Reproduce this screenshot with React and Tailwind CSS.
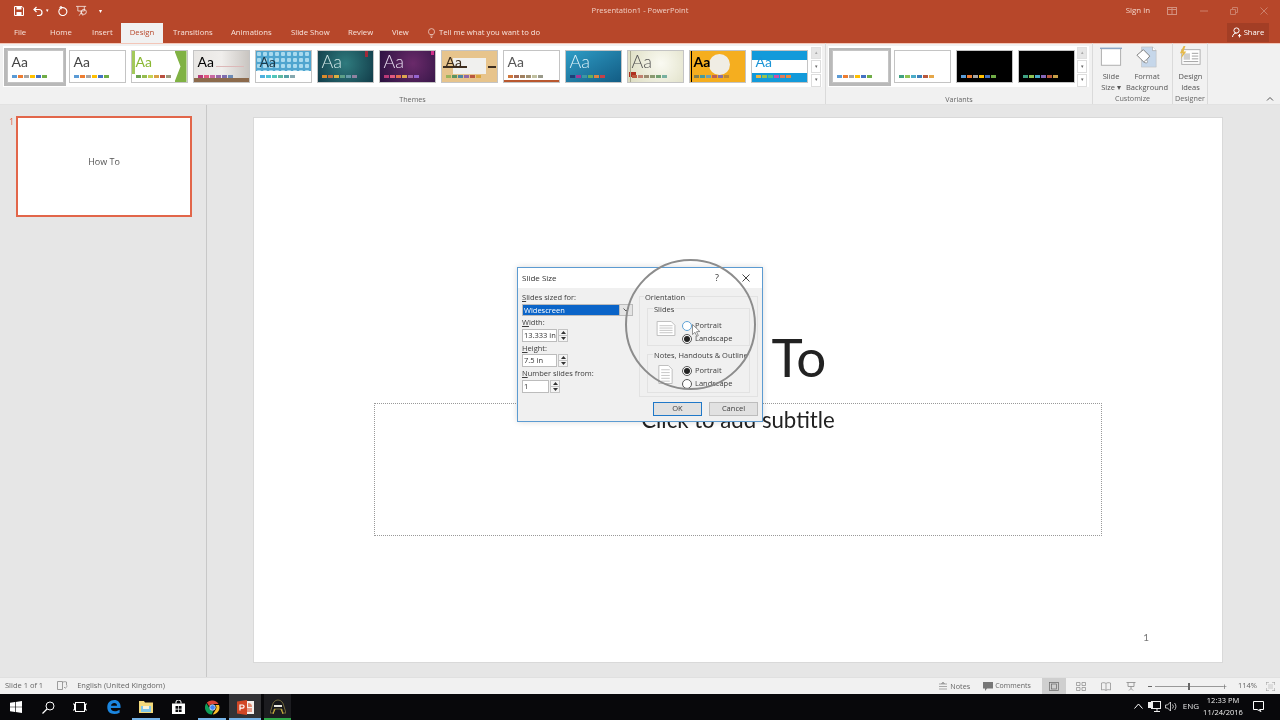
import React from "react";

const F = '[font-family:"Open_Sans","Noto_Sans",sans-serif]';

function Sw({ c, cls = "" }) {
  return (
    <div className={`absolute left-[4px] bottom-[4px] flex gap-[1px] ${cls}`}>
      {c.map((x, i) => (
        <div key={i} className="w-[5px] h-[3px]" style={{ background: x }} />
      ))}
    </div>
  );
}

function Aa({ cls = "" }) {
  return <div className={`absolute left-[4px] top-0 text-[14px] leading-[21px] [font-family:"Lato",sans-serif] ${cls}`}>Aa</div>;
}

const std = ["#5b9bd5", "#ed7d31", "#a5a5a5", "#ffc000", "#4472c4", "#70ad47"];
const themes = [
  { bg: "bg-white", aa: "text-[#444]", sw: std, sel: true },
  { bg: "bg-white", aa: "text-[#444]", sw: std },
  { bg: "bg-white", aa: "text-[#8ab833]", sw: ["#6ba24e","#96bd4f","#c6d154","#d9a145","#b9503f","#9a9a7a"],
    extra: <>
      <div className="absolute right-0 top-0 bottom-0 w-[12px] bg-[#80b244] [clip-path:polygon(0_0,100%_0,100%_100%,0_100%,50%_50%)]" />
      <div className="absolute left-0 top-0 bottom-[8px] w-[3px] bg-[#a3c95a]" />
    </> },
  { bg: "bg-gradient-to-r from-[#e8e6e3] via-[#f0eeec] to-[#c9c5c1]", aa: "text-black", sw: ["#b83a78","#e0587f","#c968a0","#9b67a8","#7e6cae","#6d8ab5"],
    extra: <>
      <div className="absolute left-[22px] right-[5px] top-[15px] h-px bg-[#dcb8b8]" />
      <div className="absolute left-0 right-0 bottom-0 h-[4px] bg-[#8c6a4c]" />
    </>, swcls: "!bottom-[4px]" },
  { bg: "bg-white", aa: "text-[#1b3a4a]", sw: ["#4fb0de","#4cc3d5","#52c6ba","#5fb9a0","#55a1a7","#86a8af"],
    extra: <div className="absolute left-0 right-0 top-0 h-[20px] bg-[#4fa5cf] bg-[radial-gradient(circle,#a9daee_2px,transparent_2.5px)] [background-size:6px_6px]" /> },
  { bg: "bg-[radial-gradient(circle_at_50%_40%,#2f7b7e,#123d4a)]", aa: "!text-[18px] font-light text-[#cfe5e5]", sw: ["#d98a2c","#c26a3f","#d9b043","#5d9f88","#669aa8","#8f82a0"],
    extra: <div className="absolute right-[5px] top-0 w-[3px] h-[6px] bg-[#a02a3a]" /> },
  { bg: "bg-[radial-gradient(circle_at_60%_40%,#6a2a6a,#2a1240)]", aa: "!text-[18px] font-light text-[#e6dcef]", sw: ["#b83a78","#e0587f","#e0704f","#dca650","#a066a8","#9565d0"],
    extra: <div className="absolute right-[1px] top-0 w-[3px] h-[4px] bg-[#d0308a]" /> },
  { bg: "bg-[#e7c48c]", aa: "text-[#3a2a1a]", sw: ["#9ab45c","#5a9460","#4e85a3","#9068a6","#b9583e","#d9a63f"],
    extra: <>
      <div className="absolute left-[11px] right-[11px] top-[7px] bottom-[8px] bg-[#f0f0ee]" />
      <div className="absolute left-[1px] right-[30px] top-[15px] h-[2px] bg-[#3e2e20]" />
      <div className="absolute left-[46px] right-[1px] top-[15px] h-[2px] bg-[#3e2e20]" />
    </> },
  { bg: "bg-white", aa: "text-[#555]", sw: ["#d0763a","#a56a55","#a08060","#a09070","#c0c0a0","#9a9a8a"],
    extra: <div className="absolute left-0 right-0 bottom-0 h-[2px] bg-[#b9582f]" /> },
  { bg: "bg-gradient-to-br from-[#2f9dc6] to-[#135d85]", aa: "!text-[18px] font-light text-[#d8f0f8]", sw: ["#1f3f78","#a03a98","#3d96a4","#6aad5a","#dd8340","#c44049"] },
  { bg: "bg-[radial-gradient(circle_at_60%_40%,#fafaf2,#dcdcc0)]", aa: "!text-[18px] font-light text-[#555]", sw: ["#b9583e","#c08070","#9a8a70","#8a9a70","#70a070","#78b0a0"],
    extra: <>
      <div className="absolute left-[1px] top-[21px] w-[7px] h-[5px] bg-[#b03020]" />
      <div className="absolute left-[2px] top-0 bottom-0 w-px bg-[#a8a890]" />
    </> },
  { bg: "bg-[#f5ae1f]", aa: "text-black font-bold", sw: ["#7f7f50","#4a9a9a","#70a0b0","#c06050","#8a70a0","#c08a30"],
    extra: <>
      <div className="absolute left-[19px] top-[3px] w-[21px] h-[21px] rounded-full bg-[#f0ede4]" />
      <div className="absolute left-[1px] top-0 bottom-0 w-px bg-black" />
    </> },
  { bg: "bg-[#139ada]", aa: "text-[#1a94d6]", sw: ["#ecb63f","#97c250","#4fbf88","#cc50a8","#dd7a5c","#ea8a3f"],
    extra: <div className="absolute left-0 right-0 top-[9px] h-[13px] bg-white" /> },
];

function Thumb({ t }) {
  return (
    <div className={`shrink-0 w-[62px] h-[38px] flex items-center justify-center ${t.sel ? "bg-[#b9b9b9]" : ""}`}>
      <div className={`relative w-[57px] h-[33px] overflow-hidden border border-[#c4c4c4] ${t.bg}`}>
        {t.extra}
        <Aa cls={t.aa} />
        <Sw c={t.sw} cls={t.swcls} />
      </div>
    </div>
  );
}

function Scroll() {
  return (
    <div className="w-[10px] h-[40px] flex flex-col gap-px">
      <div className="flex-1 bg-[#e6e6e6] border border-[#e0e0e0] flex items-center justify-center text-[5px] text-[#aaa]">▴</div>
      <div className="flex-1 bg-white border border-[#ddd] flex items-center justify-center text-[5px] text-[#666]">▾</div>
      <div className="flex-1 bg-white border border-[#ddd] flex items-center justify-center text-[5px] text-[#666]">▾</div>
    </div>
  );
}

function VThumb({ bg, sw, sel }) {
  return (
    <div className={`shrink-0 w-[62px] h-[38px] flex items-center justify-center ${sel ? "bg-[#b9b9b9]" : ""}`}>
      <div className={`relative w-[57px] h-[33px] border border-[#c4c4c4] ${bg}`}>
        <Sw c={sw} />
      </div>
    </div>
  );
}

function RibbonIconSlide() {
  return (
    <svg width="22" height="22" viewBox="0 0 24 24">
      <rect x="1.5" y="3" width="21" height="18" fill="#fff" stroke="#a9a9a9" />
      <path d="M0 2.500H24" stroke="#8da6c4" strokeWidth="1.500" />
    </svg>
  );
}
function RibbonIconFormat() {
  return (
    <svg width="22" height="22" viewBox="0 0 24 24">
      <path d="M6 1h12l4 4v18H6z" fill="#c6d7ea" stroke="#bbb" strokeWidth="0.600" />
      <path d="M18 1v4h4" fill="#fff" stroke="#999" strokeWidth="0.600" />
      <path d="M1 10l7-6 7 7-6 7z" fill="#fff" stroke="#777" />
      <circle cx="11" cy="17" r="1.600" fill="#fff" stroke="#777" strokeWidth="0.600" />
    </svg>
  );
}
function RibbonIconDesign() {
  return (
    <svg width="22" height="22" viewBox="0 0 24 24">
      <rect x="3" y="4" width="20" height="16" fill="#fff" stroke="#aaa" />
      <rect x="5" y="8" width="7" height="7" fill="#cfcfcf" />
      <path d="M14 8h7M14 11h7M14 14h7M5 17h16" stroke="#9a9a9a" />
      <path d="M5 0L1 8h3l-2 6 6-8H5l2-6z" fill="#e5b94a" />
    </svg>
  );
}

function Label({ children, cls = "" }) {
  return <div className={`text-[7.200px] leading-[12px] text-[#666] text-center ${cls}`}>{children}</div>;
}

function Ribbon() {
  return (
    <div className="h-[62px] bg-[#f1f1f1] border-b border-[#e2e2e2] shadow-[inset_0_1px_0_#f3c6b8] flex relative">
      <div className="w-[826px] shrink-0 border-r border-[#dadada] flex flex-col">
        <div className="h-[44px] pt-[3px] pl-[3px] flex">
          <div className="flex bg-white h-[41px] w-[819px] items-center justify-between pl-[1px] pr-[1px]">
            <div className="flex">{themes.map((t, i) => <Thumb key={i} t={t} />)}</div>
            <Scroll />
          </div>
        </div>
        <Label cls="mt-[6px]">Themes</Label>
      </div>
      <div className="w-[267px] shrink-0 border-r border-[#dadada] flex flex-col">
        <div className="h-[44px] pt-[3px] pl-[2px] flex">
          <div className="flex bg-white h-[41px] w-[261px] items-center justify-between pl-[1px] pr-[2px]">
            <div className="flex">
              <VThumb sel bg="bg-white" sw={std} />
              <VThumb bg="bg-white" sw={["#3fa283","#8fc352","#4bacc9","#3b7fba","#b9583e","#e5a749"]} />
              <VThumb bg="bg-black" sw={std} />
              <VThumb bg="bg-black" sw={["#3fa283","#8fc352","#4bacc9","#8566b8","#b9583e","#c79f47"]} />
            </div>
            <Scroll />
          </div>
        </div>
        <Label cls="mt-[6px]">Variants</Label>
      </div>
      <div className="w-[80px] shrink-0 border-r border-[#dadada] flex flex-col">
        <div className="flex h-[51px] pt-[3px] pl-[7px] gap-[4px] text-[7.500px] leading-[10.500px] text-[#555] text-center">
          <div className="w-[22px] flex flex-col items-center"><RibbonIconSlide /><div className="mt-[3px] whitespace-nowrap">Slide<br />Size ▾</div></div>
          <div className="w-[42px] flex flex-col items-center"><RibbonIconFormat /><div className="mt-[3px] whitespace-nowrap">Format<br />Background</div></div>
        </div>
        <Label>Customize</Label>
      </div>
      <div className="w-[35px] shrink-0 border-r border-[#dadada] flex flex-col">
        <div className="flex h-[51px] pt-[3px] pl-[1px] justify-center text-[7.500px] leading-[10.500px] text-[#555] text-center">
          <div className="flex flex-col items-center"><RibbonIconDesign /><div className="mt-[3px]">Design<br />Ideas</div></div>
        </div>
        <Label>Designer</Label>
      </div>
      <div className="absolute right-[6px] bottom-[1px]">
        <svg width="8" height="8" viewBox="0 0 8 8"><path d="M1 5.500L4 2.500L7 5.500" fill="none" stroke="#555" strokeWidth="1" /></svg>
      </div>
    </div>
  );
}

function TitleBar() {
  return (
    <div className="h-[22px] relative flex items-center text-[7.600px] text-[#f0cfc4]">
      <div className="flex items-center pl-[14px] relative z-10">
        <svg width="10" height="10" viewBox="0 0 10 10"><path d="M.5.500h7.500l1.500 1.500v7.500h-9z" fill="none" stroke="#fff" /><rect x="2.500" y="1" width="5" height="2.500" fill="#fff" /><rect x="2.500" y="6" width="5" height="3" fill="#fff" /></svg>
        <svg className="ml-[9px]" width="10" height="10" viewBox="0 0 10 10"><path d="M3.500 1L1 3.500 3.500 6M1 3.500h5a3 3 0 0 1 0 6H4" fill="none" stroke="#fff" strokeWidth="1.200" /></svg>
        <span className="ml-[3px] text-[5px] text-white">▾</span>
        <svg className="ml-[9px]" width="10" height="10" viewBox="0 0 10 10"><path d="M2.200 2.600a4 4 0 1 0 2.500-1H3M3.500 0L2 1.600l1.500 1.600" fill="none" stroke="#fff" strokeWidth="1.100" /></svg>
        <svg className="ml-[8px]" width="12" height="12" viewBox="0 0 13 12"><path d="M0 1h11M2 1v5h7V1M5.500 6v2M3.500 11l2-3 2 3" fill="none" stroke="#f4e4de" strokeWidth="0.900" /><circle cx="8.500" cy="7" r="2.700" fill="none" stroke="#fff" strokeWidth="0.800" /></svg>
        <span className="ml-[11px] text-[6px] text-white">▾</span>
      </div>
      <div className="absolute inset-0 flex items-center justify-center">Presentation1 - PowerPoint</div>
      <div className="ml-auto flex items-center text-[#f3d4c9] relative z-10">
        <span className="text-[7.900px]">Sign in</span>
        <svg className="ml-[17px] opacity-40" width="10" height="8" viewBox="0 0 10 8"><rect x=".5" y=".5" width="9" height="7" fill="none" stroke="#fff" /><path d="M5 .5v7M.5 2.500h9" stroke="#fff" /></svg>
        <svg className="ml-[23px] opacity-30" width="8" height="8" viewBox="0 0 8 8"><path d="M0 4h8" stroke="#fff" /></svg>
        <svg className="ml-[22px] opacity-30" width="8" height="8" viewBox="0 0 8 8"><path d="M.5 2.500h5v5h-5zM2.500 2.500v-2h5v5h-2" fill="none" stroke="#fff" /></svg>
        <svg className="ml-[22px] mr-[12px] opacity-30" width="8" height="8" viewBox="0 0 8 8"><path d="M.5.500l7 7M7.500.500l-7 7" stroke="#fff" /></svg>
      </div>
    </div>
  );
}

function Tabs() {
  const items = [["File", 36], ["Home", 42], ["Insert", 29], ["Design", 0], ["Transitions", 58], ["Animations", 60], ["Slide Show", 57], ["Review", 44], ["View", 36]];
  return (
    <div className="h-[21px] flex items-end relative text-[7.700px] text-[#f7e4dd] pl-[14px]">
      {items.map(([t, w]) =>
        t === "Design" ? (
          <div key={t} className="h-[20px] w-[42px] mr-[10px] bg-[#f1f1f1] text-[#b7472a] flex items-center justify-center">{t}</div>
        ) : (
          <div key={t} style={{ width: w }} className="h-[20px] shrink-0 flex items-center">{t}</div>
        )
      )}
      <div className="h-[20px] flex items-center gap-[4px]">
        <svg width="7" height="10" viewBox="0 0 7 10"><path d="M1.800 6.500C1 5.500.5 5 .5 3.600a3 3 0 0 1 6 0C6.500 5 6 5.500 5.200 6.500zM2.300 8h2.400M2.800 9.500h1.400" fill="none" stroke="#f7e4dd" strokeWidth="0.700" /></svg>
        <span>Tell me what you want to do</span>
      </div>
      <div className="ml-auto mr-[11px] mb-[1px] w-[42px] h-[19px] bg-[#a33e25] flex items-center justify-center gap-[2px] text-white">
        <svg width="10" height="11" viewBox="0 0 10 11"><circle cx="4.500" cy="3.500" r="2.600" fill="none" stroke="#fff" /><path d="M.5 10c.3-2.500 2-4 4-4M7.500 7v3.500M6 8.700h3.200" fill="none" stroke="#fff" /></svg>
        <span>Share</span>
      </div>
    </div>
  );
}

function Spin({ w, text }) {
  return (
    <div className="flex items-center">
      <div className="h-[13px] bg-white border border-[#bcbcbc] text-[7.500px] leading-[11px] pl-[1px] text-[#333] whitespace-nowrap overflow-hidden" style={{ width: w }}>{text}</div>
      <div className="ml-[1px] w-[10px] h-[13px] border border-[#c4c4c4] flex flex-col">
        <div className="flex-1 bg-[#f4f4f4] border-b border-[#c4c4c4] flex items-center justify-center"><svg width="5" height="3" viewBox="0 0 5 3"><path d="M2.500 0L5 3H0z" fill="#333" /></svg></div>
        <div className="flex-1 bg-[#f4f4f4] flex items-center justify-center"><svg width="5" height="3" viewBox="0 0 5 3"><path d="M2.500 3L5 0H0z" fill="#333" /></svg></div>
      </div>
    </div>
  );
}

function Radio({ on, hover, label }) {
  return (
    <div className="flex items-center gap-[3px] h-[13px]">
      <div className={`w-[10px] h-[10px] rounded-full border bg-white flex items-center justify-center ${hover ? "border-[#5fa3d6]" : "border-[#555]"}`}>
        {on && <div className="w-[6px] h-[6px] rounded-full bg-[#222]" />}
      </div>
      <span>{label}</span>
    </div>
  );
}

function Doc() {
  return (
    <svg className="mt-[2px]" width="20" height="15" viewBox="0 0 20 16"><path d="M.5.500h15l4 4v11H.5z" fill="#fff" stroke="#bbb" /><path d="M3 5h14M3 7.500h14M3 10h14M3 12.500h14" stroke="#aaa" strokeWidth="0.700" /></svg>
  );
}
function DocTall() {
  return (
    <svg className="mt-[1px]" width="15" height="19" viewBox="0 0 15 20"><path d="M.5.500h10l4 4v15H.5z" fill="#fff" stroke="#bbb" /><path d="M3 5h9M3 8h9M3 11h9M3 14h9M3 17h9" stroke="#aaa" strokeWidth="0.700" /></svg>
  );
}

function Dialog() {
  return (
    <div className="absolute left-[517px] top-[267px] w-[246px] h-[155px] bg-[#f0f0f0] border border-[#5c9bd1] flex flex-col text-[7.500px] text-[#3c3c3c] shadow-[0_0_6px_rgba(0,0,0,0.15)]">
      <div className="h-[20px] bg-white flex items-center pl-[4px] shrink-0 text-[8px] text-[#333]">
        <span>Slide Size</span>
        <span className="ml-auto text-[9px] text-[#333]">?</span>
        <svg className="ml-[23px] mr-[12px]" width="8" height="8" viewBox="0 0 8 8"><path d="M.5.500l7 7M7.500.500l-7 7" stroke="#444" /></svg>
      </div>
      <div className="flex-1 flex pl-[4px] pr-[4px] pt-[4px] relative">
        <div className="w-[117px] flex flex-col shrink-0">
          <div className="h-[12px] leading-[10px]"><u>S</u>lides sized for:</div>
          <div className="flex h-[12px] w-[111px] border border-[#bbb] bg-white">
            <div className="flex-1 bg-[#0a64c8] text-white text-[7.500px] leading-[10px] pl-[1px]">Widescreen</div>
            <div className="w-[13px] flex items-center justify-center bg-[#e4e4e4] border-l border-[#bbb]"><svg width="6" height="4" viewBox="0 0 6 4"><path d="M.5.500L3 3l2.500-2.500" fill="none" stroke="#555" /></svg></div>
          </div>
          <div className="h-[13px] leading-[13px]"><u>W</u>idth:</div>
          <Spin w={35} text="13.333 in" />
          <div className="h-[12px] leading-[12px]"><u>H</u>eight:</div>
          <Spin w={35} text="7.5 in" />
          <div className="h-[13px] leading-[13px]"><u>N</u>umber slides from:</div>
          <Spin w={27} text="1" />
        </div>
        <div className="flex-1 flex flex-col relative pt-[4px]">
          <div className="h-[101px] w-[119px] border border-[#e2e2e2] pl-[7px] pr-[7px] pt-[11px] relative">
            <span className="absolute left-[4px] -top-[5px] bg-[#f0f0f0] px-[1px]">Orientation</span>
            <div className="h-[38px] border border-[#e2e2e2] relative flex items-start pt-[10px] pl-[8px] gap-[6px]">
              <span className="absolute left-[5px] -top-[5px] bg-[#f0f0f0] px-[1px]">Slides</span>
              <Doc />
              <div className="flex flex-col"><Radio hover label="Portrait" /><Radio on label="Landscape" /></div>
            </div>
            <div className="h-[39px] mt-[8px] border border-[#e2e2e2] relative flex items-start pt-[9px] pl-[10px] gap-[9px]">
              <span className="absolute left-[5px] -top-[5px] bg-[#f0f0f0] px-[1px] whitespace-nowrap">Notes, Handouts &amp; Outline</span>
              <DocTall />
              <div className="flex flex-col"><Radio on label="Portrait" /><Radio label="Landscape" /></div>
            </div>
          </div>
          <div className="flex mt-[5px] ml-[14px] gap-[7px]">
            <div className="w-[49px] h-[14px] bg-[#e1e1e1] border border-[#1f78c8] flex items-center justify-center">OK</div>
            <div className="w-[49px] h-[14px] bg-[#e1e1e1] border border-[#bdbdbd] flex items-center justify-center">Cancel</div>
          </div>
        </div>
      </div>
      <div className="absolute left-[107px] -top-[9px] w-[131px] h-[131px] rounded-full border-2 border-[#8c8c8c] pointer-events-none" />
      <svg className="absolute left-[174px] top-[56px]" width="9" height="13" viewBox="0 0 9 13"><path d="M.5.500v10l2.500-2.200 1.800 4 1.500-.7-1.800-3.900 3.300-.2z" fill="#fff" stroke="#666" strokeWidth="0.700" /></svg>
    </div>
  );
}

function Main() {
  return (
    <div className="flex-1 flex min-h-0 bg-[#e6e6e6]">
      <div className="w-[207px] shrink-0 border-r border-[#c8c8c8] flex pt-[11px] pl-[9px]">
        <div className="w-[7px] text-[9px] leading-[10px] text-[#e2664a] pt-[1px]">1</div>
        <div className="w-[176px] h-[101px] bg-white border-2 border-[#e2664a] flex items-center justify-center text-[9px] text-[#555] pb-[9px]">How To</div>
      </div>
      <div className="flex-1 pl-[46px] pr-[57px] pt-[12px] pb-[14px] flex">
        <div className="flex-1 bg-white border border-[#d9d9d9] flex flex-col">
          <div className="h-[285px] flex items-end justify-center text-[53px] leading-[66px] text-[#222] [font-family:'Lato',sans-serif] pb-[13px]">How To</div>
          <div className="mx-[120px] h-[133px] border border-dotted border-[#999] text-center text-[22.200px] leading-[32px] text-[#222] [font-family:'Lato',sans-serif]">Click to add subtitle</div>
          <div className="text-right pr-[73px] mt-[94px] text-[10px] text-[#777] [font-family:'Lato',sans-serif]">1</div>
        </div>
      </div>
    </div>
  );
}

function StatusBar() {
  return (
    <div className="h-[17px] bg-[#f1f1f1] border-t border-[#e0e0e0] flex items-center text-[7.500px] text-[#666]">
      <span className="ml-[5px]">Slide 1 of 1</span>
      <svg className="ml-[14px]" width="11" height="10" viewBox="0 0 11 10"><path d="M.5.500h5v8h-5zM5.500 1.500c1-1 3-1 4-.5v3.500M7 6l1.200 1.200L10.500 5" fill="none" stroke="#888" strokeWidth="0.800" /></svg>
      <span className="ml-[9px]">English (United Kingdom)</span>
      <div className="ml-auto flex items-center">
        <svg width="8" height="8" viewBox="0 0 8 8"><path d="M0 2h8M0 4.500h8M0 7h8M4 0L2.500 1.500h3z" stroke="#888" strokeWidth="0.700" fill="none" /></svg>
        <span className="ml-[3px] text-[7.200px]">Notes</span>
        <svg className="ml-[13px]" width="10" height="9" viewBox="0 0 10 9"><path d="M0 0h10v6.500H4L2 9V6.500H0z" fill="#777" /></svg>
        <span className="ml-[2px] text-[7px]">Comments</span>
        <div className="ml-[11px] w-[24px] h-[16px] bg-[#cfcfcf] flex items-center justify-center">
          <svg width="10" height="9" viewBox="0 0 10 9"><rect x=".5" y=".5" width="9" height="8" fill="none" stroke="#666" strokeWidth="0.700" /><rect x="2.500" y="2" width="5" height="5" fill="none" stroke="#666" strokeWidth="0.700" /></svg>
        </div>
        <svg className="ml-[10px]" width="10" height="9" viewBox="0 0 10 9"><path d="M.5.500h3.500v3H.5zM6 .5h3.500v3H6zM.5 5.500h3.500v3H.5zM6 5.500h3.500v3H6z" fill="none" stroke="#888" strokeWidth="0.700" /></svg>
        <svg className="ml-[15px]" width="10" height="9" viewBox="0 0 10 9"><path d="M5 1.500C4 .5 2 .5.500 1v7c1.500-.5 3.500-.5 4.500.5 1-1 3-1 4.500-.5V1C8 .5 6 .5 5 1.500zM5 1.500v7" fill="none" stroke="#888" strokeWidth="0.700" /></svg>
        <svg className="ml-[15px]" width="10" height="9" viewBox="0 0 10 9"><path d="M.5.500h9M2 .5v4h6v-4M5 4.500v2M3 8.500l2-2 2 2" fill="none" stroke="#888" strokeWidth="0.800" /></svg>
        <div className="ml-[12px] w-[4px] h-px bg-[#666]" />
        <div className="ml-[3px] w-[68px] h-px bg-[#999] relative">
          <div className="absolute left-[33px] -top-[3px] w-[2px] h-[7px] bg-[#666]" />
        </div>
        <span className="ml-[-1px] text-[9px] leading-[9px]">+</span>
        <span className="ml-[11px]">114%</span>
        <svg className="ml-[9px] mr-[5px]" width="9" height="9" viewBox="0 0 9 9"><path d="M0 3V0h3M6 0h3v3M9 6v3H6M3 9H0V6" fill="none" stroke="#999" /><rect x="2" y="2" width="5" height="5" fill="#ddd" /></svg>
      </div>
    </div>
  );
}

function TIcon({ children, w, cls = "", line }) {
  return (
    <div className={`h-[26px] flex items-center justify-center relative ${cls}`} style={{ width: w }}>
      {children}
      {line && <div className="absolute left-0 right-0 bottom-0 h-[2px]" style={{ background: line }} />}
    </div>
  );
}

function Taskbar() {
  return (
    <div className="h-[26px] bg-[#08080b] flex items-center text-white">
      <TIcon w={32}>
        <svg width="12" height="12" viewBox="0 0 12 12"><path d="M0 1.700L5 1v4.700H0zM5.700.9L12 0v5.700H5.700zM0 6.300h5V11L0 10.300zM5.700 6.300H12V12l-6.300-.9z" fill="#fff" /></svg>
      </TIcon>
      <TIcon w={32}>
        <svg width="13" height="13" viewBox="0 0 13 13"><circle cx="8" cy="5" r="4" fill="none" stroke="#fff" /><path d="M5 8l-4.500 4.500" stroke="#fff" strokeWidth="1.200" /></svg>
      </TIcon>
      <TIcon w={32}>
        <svg width="14" height="10" viewBox="0 0 14 10"><rect x="2.500" y=".5" width="9" height="9" fill="none" stroke="#fff" /><path d="M0 2h1.500v6H0M14 2h-1.500v6H14" fill="none" stroke="#fff" /></svg>
      </TIcon>
      <TIcon w={36}>
        <svg width="14" height="14" viewBox="0 0 14 14"><path d="M13.500 8H3.800c.2 2.200 1.800 3.300 4 3.300 2 0 3.500-.6 4.800-1.500v3c-1.500.8-3.200 1.200-5.200 1.200C2.800 14 .3 11.500.3 7.300.3 3 3 0 7.200 0c4 0 6.400 2.700 6.400 7zM10 5.700C10 4 9 3 7.300 3 5.600 3 4.300 4 4 5.700z" fill="#1b86e0" /></svg>
      </TIcon>
      <TIcon w={28} line="#75b3e8">
        <svg width="14" height="12" viewBox="0 0 14 12"><path d="M0 0h5l1 1.500h8V12H0z" fill="#f3d97b" /><rect x="2" y="5" width="10" height="6" fill="#7fc6e8" /><rect x="4" y="5" width="6" height="3" fill="#f8f2d8" /></svg>
      </TIcon>
      <TIcon w={36}>
        <svg width="13" height="14" viewBox="0 0 13 14"><path d="M0 3.500h13V14H0z" fill="#fff" /><path d="M4 3.500V2a2.500 2 0 0 1 5 0v1.500" fill="none" stroke="#fff" /><path d="M3.500 6h2.700v2.700H3.500zM6.900 6h2.700v2.700H6.900zM3.500 9.400h2.700v2.700H3.500zM6.900 9.400h2.700v2.700H6.900z" fill="#08080b" /></svg>
      </TIcon>
      <TIcon w={28} line="#75b3e8" cls="ml-[2px]">
        <svg width="15" height="15" viewBox="0 0 32 32">
          <path d="M16 1a15 15 0 0 1 13 7.500H16a7.500 7.500 0 0 0-7 4.800L4 5.500A15 15 0 0 1 16 1z" fill="#db4437" />
          <path d="M29.800 10.500A15 15 0 0 1 16.500 31l6.500-11a7.500 7.500 0 0 0-1-9.500z" fill="#fbc02d" />
          <path d="M14.500 31A15 15 0 0 1 3 7l6.600 11.300a7.500 7.500 0 0 0 8 4.500z" fill="#0f9d58" />
          <circle cx="16" cy="16" r="6" fill="#4285f4" stroke="#fff" strokeWidth="1.500" />
        </svg>
      </TIcon>
      <TIcon w={32} line="#75b3e8" cls="ml-[3px] bg-[#333336]">
        <svg width="17" height="15" viewBox="0 0 17 15">
          <rect x="6" y="1" width="11" height="13" fill="#f4f0ee" />
          <path d="M11 3a4 4 0 0 1 4 4h-4z" fill="#e08a70" />
          <path d="M9 9h6M9 11h6" stroke="#d24726" />
          <path d="M0 1.500L10 0v15L0 13.500z" fill="#d24726" />
          <path d="M3 4.500v6M3 5h2.500a1.500 1.500 0 0 1 0 3.200H3" fill="none" stroke="#fff" strokeWidth="1.200" />
        </svg>
      </TIcon>
      <TIcon w={27} line="#2fa84a" cls="ml-[3px] bg-[#1c1c20]">
        <svg width="16" height="16" viewBox="0 0 16 16"><path d="M8 1c3 0 5 2.500 5.500 5L16 14h-3l-1-4H4l-1 4H0l2.500-8C3 3.500 5 1 8 1z" fill="#17171a" stroke="#c9b45a" strokeWidth="0.500" /><path d="M4 6h8v2H4z" fill="#e8e8e0" /><path d="M5 10l-2 5M11 10l2 5" stroke="#d6b93a" /></svg>
      </TIcon>
      <div className="ml-auto flex items-center text-[#e6e6e6] pb-[2px]">
        <svg width="9" height="6" viewBox="0 0 9 6"><path d="M.5 5.500L4.500 1l4 4.500" fill="none" stroke="#fff" /></svg>
        <svg className="ml-[5px]" width="13" height="11" viewBox="0 0 13 11"><rect x="3.500" y=".5" width="9" height="7" fill="none" stroke="#eee" /><rect x="0" y="1" width="5" height="6" fill="#eee" /><path d="M6 10.500h6M9 8v2" stroke="#eee" /></svg>
        <svg className="ml-[4px]" width="12" height="11" viewBox="0 0 12 11"><path d="M.5 4h2L5.500 1v9L2.500 7h-2zM7.500 3.500a3 3 0 0 1 0 4M9.500 2a5 5 0 0 1 0 7" fill="none" stroke="#eee" strokeWidth="0.800" /></svg>
        <span className="ml-[6px] text-[8px]">ENG</span>
        <div className="ml-[4px] w-[40px] text-center text-[7.500px] leading-[12px] text-[#eee]">12:33 PM<br />11/24/2016</div>
        <svg className="ml-[10px] mr-[16px]" width="11" height="11" viewBox="0 0 11 11"><path d="M.5.500h10v8H6.500L8 10.500 4 8.500H.5z" fill="none" stroke="#fff" /></svg>
      </div>
    </div>
  );
}

export default function App() {
  return (
    <div className={`w-[1280px] h-[720px] overflow-hidden relative flex flex-col bg-[#b7472a] blur-[0.35px] ${F}`}>
      <TitleBar />
      <Tabs />
      <Ribbon />
      <Main />
      <StatusBar />
      <Taskbar />
      <Dialog />
    </div>
  );
}
